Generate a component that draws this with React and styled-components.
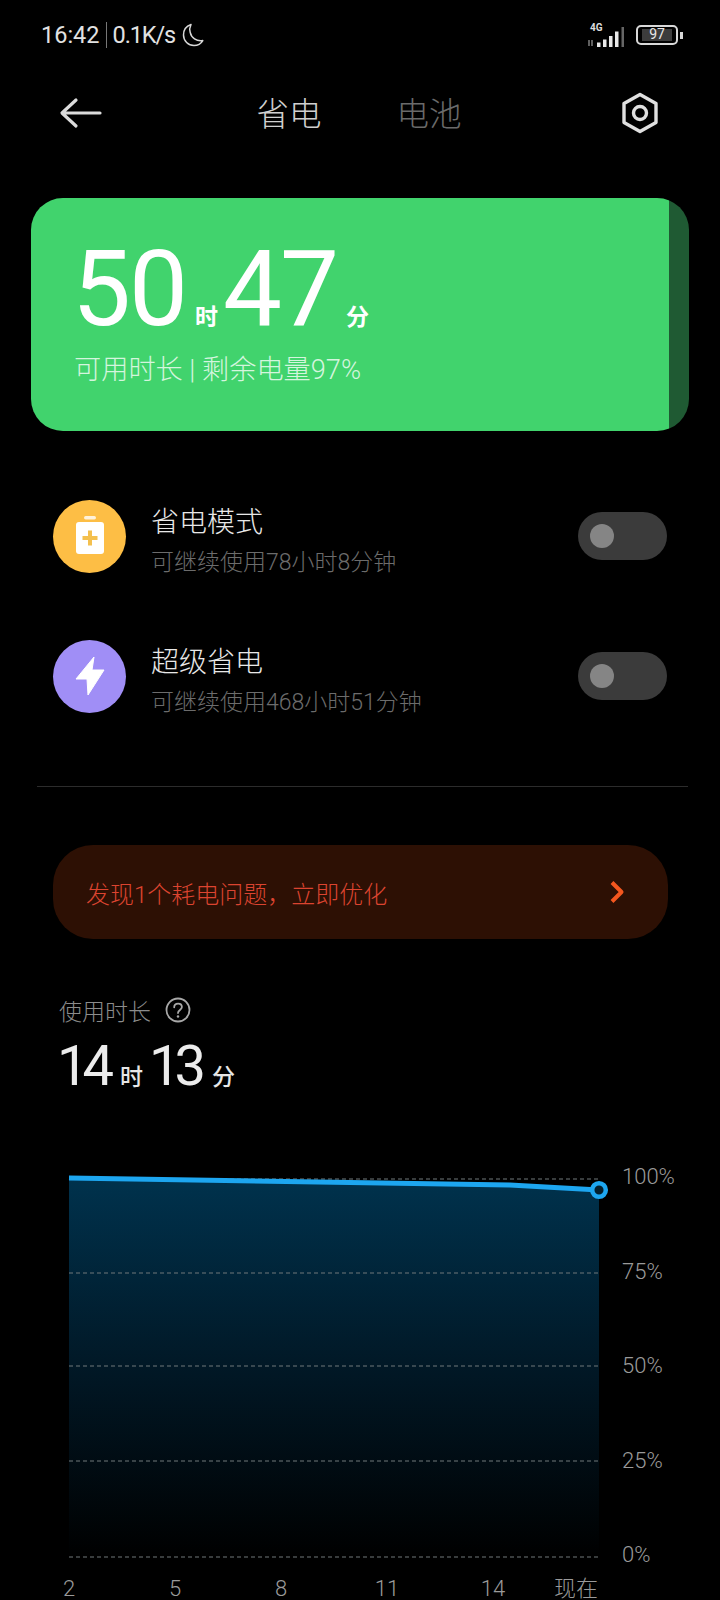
import React from "react";
import styled, { createGlobalStyle } from "styled-components";

const FONT = `Roboto, "Noto Sans CJK SC", sans-serif`;

const GlobalStyle = createGlobalStyle`
  html, body {
    margin: 0;
    background: #000;
  }
`;

const gridLines = [1178, 1272, 1365, 1460, 1556];
const yLabels = ["100%", "75%", "50%", "25%", "0%"];
const xTicks = ["2", "5", "8", "11", "14"];

export default function App() {
  return (
    <Page>
      <GlobalStyle />
      <StatusBar>
        <StatusLeft>
          <span>16:42</span>
          <StatusDivider />
          <NetSpeed>0.1K/s</NetSpeed>
          <svg width="24" height="26" viewBox="0 0 24 26" fill="none">
            <path
              d="M10 2.500C5.500 4 2.500 8 2.500 13c0 6 4.800 10.500 10.500 10.500 3.800 0 7-1.900 8.800-4.900-6.300 1.200-11.600-3-12.600-8.200C8.300 7.700 8.800 5 10 2.500Z"
              stroke="#d8d8d8"
              strokeWidth="1.500"
              strokeLinejoin="round"
            />
          </svg>
        </StatusLeft>
        <StatusRight>
          <svg width="40" height="28" viewBox="0 0 40 28">
            <text x="2" y="10" fill="#ddd" fontSize="10" fontWeight="700" fontFamily="Roboto, sans-serif">4G</text>
            <path d="M1 19v6M4 19v6" stroke="#777" strokeWidth="1.600" />
            <path d="M9 21.500h3.500V26H9ZM15 18.500h3.500V26H15ZM21 15h3.500v11H21ZM27 10.500h3.500V26H27Z" fill="#e8e8e8" />
            <path d="M33.500 6H36v20h-2.500Z" fill="#666" />
          </svg>
          <Battery>
            <BatteryBody>97</BatteryBody>
            <BatteryNub />
          </Battery>
        </StatusRight>
      </StatusBar>

      <Nav>
        <svg width="44" height="32" viewBox="0 0 44 32" fill="none">
          <path d="M17 3 3 16 17 29M4 16h37" stroke="#dcdcdc" strokeWidth="3.200" strokeLinecap="round" strokeLinejoin="round" />
        </svg>
        <Tabs>
          <Tab $active>省电</Tab>
          <Tab>电池</Tab>
        </Tabs>
        <svg width="38" height="42" viewBox="0 0 38 42" fill="none">
          <path d="M19 2.500 35 11.500v19L19 39.500 3 30.500v-19Z" stroke="#e0e0e0" strokeWidth="3.400" strokeLinejoin="round" />
          <circle cx="19" cy="21" r="6.500" stroke="#e0e0e0" strokeWidth="3.400" />
        </svg>
      </Nav>

      <Card>
        <CardTime>
          <CardDigits>50</CardDigits>
          <CardUnit>时</CardUnit>
          <CardDigits>47</CardDigits>
          <CardUnit>分</CardUnit>
        </CardTime>
        <CardNote>可用时长 | 剩余电量97%</CardNote>
      </Card>

      <ModeList>
        <ModeRow>
          <ModeIcon $color="#fdbe45">
            <svg width="34" height="42" viewBox="0 0 34 42">
              <rect x="11" y="1" width="12" height="3.500" rx="1.700" fill="#fff" opacity="0.8" />
              <rect x="3" y="7" width="28" height="32" rx="3" fill="#fff" />
              <path d="M17 15.500v15M9.500 23h15" stroke="#f4c04e" strokeWidth="4" />
            </svg>
          </ModeIcon>
          <ModeText>
            <ModeTitle>省电模式</ModeTitle>
            <ModeSub>可继续使用78小时8分钟</ModeSub>
          </ModeText>
          <Toggle>
            <Knob />
          </Toggle>
        </ModeRow>
        <ModeRow>
          <ModeIcon $color="#a08ef6">
            <svg width="30" height="40" viewBox="0 0 30 40">
              <path d="M19 1 1 23h11L13 39 29 14H17Z" fill="#fff" stroke="#fff" strokeWidth="1" strokeLinejoin="round" />
            </svg>
          </ModeIcon>
          <ModeText>
            <ModeTitle>超级省电</ModeTitle>
            <ModeSub>可继续使用468小时51分钟</ModeSub>
          </ModeText>
          <Toggle>
            <Knob />
          </Toggle>
        </ModeRow>
      </ModeList>

      <Divider />

      <Banner>
        <BannerText>发现1个耗电问题，立即优化</BannerText>
        <svg width="16" height="24" viewBox="0 0 16 24" fill="none">
          <path d="M3 2.500 12.500 12 3 21.500" stroke="#f4571f" strokeWidth="4" strokeLinejoin="round" />
        </svg>
      </Banner>

      <UsageHead>
        <UsageLabel>使用时长</UsageLabel>
        <svg width="26" height="26" viewBox="0 0 26 26" fill="none">
          <circle cx="13" cy="13" r="11.500" stroke="#a8a8a8" strokeWidth="1.800" />
          <path d="M9.200 10.300c0-2.200 1.700-3.700 3.900-3.700s3.800 1.400 3.800 3.400c0 2.900-3.900 3-3.900 6" stroke="#a8a8a8" strokeWidth="1.800" strokeLinecap="round" />
          <circle cx="13" cy="19.500" r="1.200" fill="#a8a8a8" />
        </svg>
      </UsageHead>
      <UsageTime>
        <UsageDigits>14</UsageDigits>
        <UsageUnit>时</UsageUnit>
        <UsageDigits>13</UsageDigits>
        <UsageUnit>分</UsageUnit>
      </UsageTime>

      <ChartRow>
        <ChartPlot width="553" height="406" viewBox="0 1164 553 406" fill="none">
          <defs>
            <linearGradient id="usageFill" x1="0" y1="0" x2="0" y2="1">
              <stop offset="0" stopColor="#00324d" />
              <stop offset="0.5" stopColor="#011826" />
              <stop offset="1" stopColor="#000" />
            </linearGradient>
          </defs>
          <path d="M0 1177 L441 1184 L530 1189 V1556 H0 Z" fill="url(#usageFill)" />
          {gridLines.map((y) => (
            <line key={y} x1="0" x2="530" y1={y} y2={y} stroke="#70787b" strokeWidth="1" strokeDasharray="4 3" />
          ))}
          <path d="M0 1177 L441 1184 L530 1189" stroke="#1da6f0" strokeWidth="5" />
          <circle cx="530" cy="1189" r="6.800" fill="#04202e" stroke="#1da6f0" strokeWidth="4.500" />
        </ChartPlot>
        <YAxis>
          {yLabels.map((label) => (
            <AxisLabel key={label}>{label}</AxisLabel>
          ))}
        </YAxis>
      </ChartRow>

      <XAxis>
        {xTicks.map((tick) => (
          <XTick key={tick}>{tick}</XTick>
        ))}
        <XTick $now>现在</XTick>
      </XAxis>
    </Page>
  );
}

const Page = styled.div`
  width: 720px;
  height: 1600px;
  overflow: hidden;
  display: flex;
  flex-direction: column;
  background: #000;
  color: #fff;
  font-family: ${FONT};
`;

const StatusBar = styled.div`
  height: 70px;
  flex: none;
  display: flex;
  align-items: center;
  justify-content: space-between;
  padding: 0 37px 0 41px;
`;

const StatusLeft = styled.div`
  display: flex;
  align-items: center;
  gap: 6px;
  font-size: 23.500px;
  color: #e2e2e2;
`;

const NetSpeed = styled.span`
  letter-spacing: -1.100px;
`;

const StatusDivider = styled.div`
  width: 1px;
  height: 26px;
  background: #777;
`;

const StatusRight = styled.div`
  display: flex;
  align-items: center;
  gap: 8px;
`;

const Battery = styled.div`
  display: flex;
  align-items: center;
  gap: 2px;
`;

const BatteryBody = styled.div`
  width: 42px;
  height: 20px;
  box-sizing: border-box;
  border: 2.500px solid #d8d8d8;
  border-radius: 5px;
  background: linear-gradient(#3c3c3c, #3c3c3c) center / 30px 12px no-repeat;
  color: #e8e8e8;
  font-size: 14px;
  line-height: 15px;
  text-align: center;
`;

const BatteryNub = styled.div`
  width: 3px;
  height: 7px;
  background: #d8d8d8;
`;

const Nav = styled.div`
  height: 86px;
  flex: none;
  display: flex;
  align-items: center;
  justify-content: space-between;
  padding: 0 61px 0 59px;
`;

const Tabs = styled.div`
  display: flex;
  gap: 75px;
  margin: 0 6px 4px 0;
`;

const Tab = styled.div`
  font-size: 32.500px;
  font-weight: 300;
  color: ${(p) => (p.$active ? "#d0d0d0" : "#6a6a6a")};
`;

const Card = styled.div`
  flex: none;
  height: 233px;
  margin: 42px 31px 0;
  box-sizing: border-box;
  padding: 57px 0 0 41px;
  border-radius: 32px;
  background: linear-gradient(to right, #41d36d 638px, #1f5a33 638px);
`;

const CardTime = styled.div`
  display: flex;
  align-items: baseline;
  line-height: 70px;
`;

const CardDigits = styled.span`
  font-size: 105px;
  font-weight: 400;
  letter-spacing: -2px;
  color: #fff;
`;

const CardUnit = styled.span`
  font-size: 23px;
  font-weight: 700;
  margin: 0 5px 0 9px;
  color: #fff;
`;

const CardNote = styled.div`
  margin-left: 2px;
  font-size: 27.200px;
  font-weight: 300;
  line-height: 34px;
  color: #d4f5de;
`;

const ModeList = styled.div`
  flex: none;
  margin-top: 35px;
  display: flex;
  flex-direction: column;
`;

const ModeRow = styled.div`
  height: 140px;
  display: flex;
  align-items: center;
  padding: 0 53px 0 53px;
`;

const ModeIcon = styled.div`
  width: 73px;
  height: 73px;
  flex: none;
  border-radius: 50%;
  display: flex;
  align-items: center;
  justify-content: center;
  background: ${(p) => p.$color};
`;

const ModeText = styled.div`
  flex: 1;
  margin-left: 25px;
  padding-top: 10px;
`;

const ModeTitle = styled.div`
  font-size: 28px;
  line-height: 40px;
  font-weight: 300;
  color: #e8e8e8;
`;

const ModeSub = styled.div`
  font-size: 23px;
  line-height: 32px;
  margin-top: 4px;
  font-weight: 300;
  color: #6c6c6c;
`;

const Toggle = styled.div`
  width: 89px;
  height: 48px;
  flex: none;
  box-sizing: border-box;
  padding-left: 12px;
  display: flex;
  align-items: center;
  border-radius: 24px;
  background: #3b3b3b;
`;

const Knob = styled.div`
  width: 24px;
  height: 24px;
  border-radius: 50%;
  background: #858585;
`;

const Divider = styled.div`
  flex: none;
  height: 1px;
  margin: 40px 32px 0 37px;
  background: #2c2c2c;
`;

const Banner = styled.div`
  flex: none;
  height: 94px;
  margin: 58px 52px 0 53px;
  box-sizing: border-box;
  padding: 0 43px 0 33px;
  display: flex;
  align-items: center;
  justify-content: space-between;
  border-radius: 40px;
  background: #2d1004;
`;

const BannerText = styled.div`
  font-size: 24px;
  font-weight: 300;
  color: #dc4430;
`;

const UsageHead = styled.div`
  flex: none;
  margin: 56px 0 0 59px;
  height: 30px;
  display: flex;
  align-items: center;
  gap: 14px;
`;

const UsageLabel = styled.div`
  font-size: 23px;
  font-weight: 300;
  color: #8c8c8c;
`;

const UsageTime = styled.div`
  flex: none;
  margin: 9px 0 0 57px;
  display: flex;
  align-items: baseline;
  line-height: 64px;
`;

const UsageDigits = styled.span`
  font-size: 56px;
  letter-spacing: -6px;
  color: #ececec;
`;

const UsageUnit = styled.span`
  font-size: 23px;
  font-weight: 500;
  margin: 0 6px 0 12px;
  color: #e6e6e6;
`;

const ChartRow = styled.div`
  flex: none;
  margin: 55px 0 0 69px;
  display: flex;
`;

const ChartPlot = styled.svg`
  flex: none;
  overflow: visible;
`;

const YAxis = styled.div`
  height: 406px;
  margin-top: -2px;
  display: flex;
  flex-direction: column;
  justify-content: space-between;
`;

const AxisLabel = styled.div`
  font-size: 22px;
  font-weight: 300;
  line-height: 28px;
  color: #9a9a9a;
`;

const XAxis = styled.div`
  flex: none;
  margin: 4px 0 0 16px;
  display: flex;
`;

const XTick = styled.div`
  width: ${(p) => (p.$now ? "60px" : "106px")};
  font-size: 22px;
  font-weight: 300;
  line-height: 28px;
  text-align: center;
  color: #9a9a9a;
`;
